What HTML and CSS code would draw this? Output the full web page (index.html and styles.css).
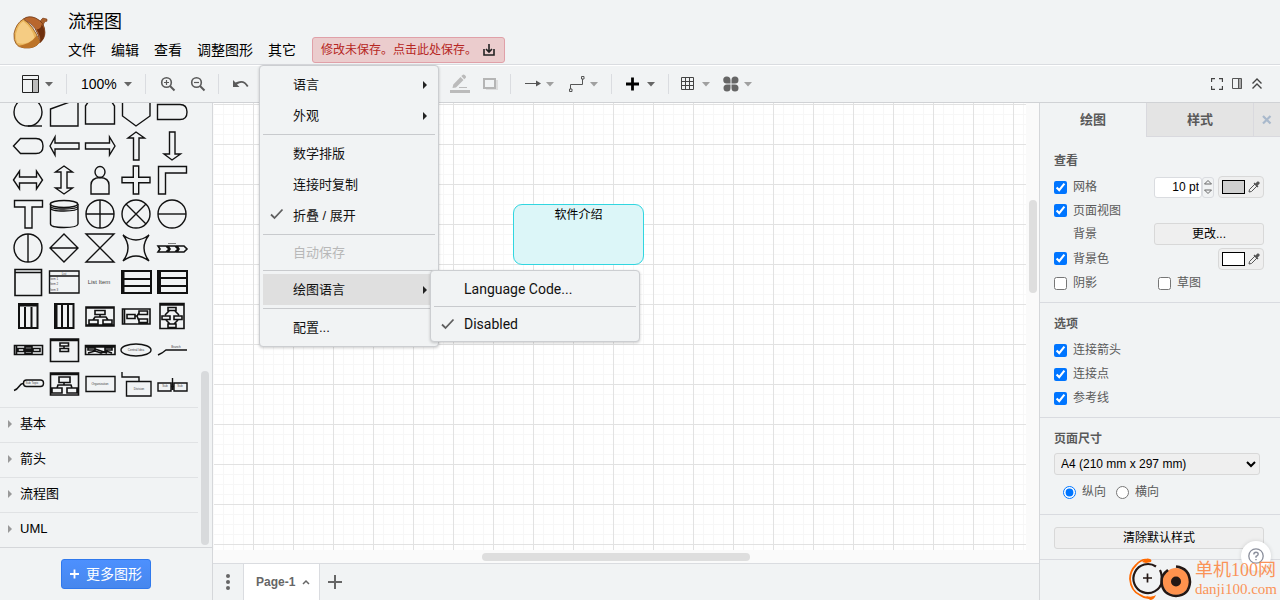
FILE: index.html
```html
<!DOCTYPE html>
<html lang="zh-CN">
<head>
<meta charset="utf-8">
<title>流程图</title>
<link rel="stylesheet" href="styles.css">
</head>
<body>
<svg class="defs" aria-hidden="true">
  <symbol id="caret" viewBox="0 0 10 16"><path d="M1 6h8l-4 4.500z" fill="currentColor"/></symbol>
  <symbol id="check" viewBox="0 0 14 12"><path d="M1 6.500l3.500 3.500L12.500 1.500" fill="none" stroke="#5f5f5f" stroke-width="1.800"/></symbol>
  <symbol id="sub" viewBox="0 0 6 10"><path d="M1 1l4 4-4 4z" fill="#222"/></symbol>
  <symbol id="exp" viewBox="0 0 6 10"><path d="M1 1l4 4-4 4z" fill="#999"/></symbol>
  <symbol id="dropper" viewBox="0 0 12 12"><path d="M1 11l.5-2.500 5.500-5.500 2 2-5.500 5.500z" fill="none" stroke="#555"/><path d="M6 2l4 4M7.500 3.500l2-2.300q1.500-.5 1.500 1l-2.500 2.500z" stroke="#555" stroke-width="1.300" fill="#555"/></symbol>
</svg>

<header class="header">
  <svg class="logo" viewBox="0 0 34 34">
    <path d="M26 9q0-4 3-6l4 1v2q-3 0-4 5z" fill="#a9602c" stroke="#7a3c18" stroke-width=".6"/>
    <path d="M10 4Q15 0 22 3Q31 7 31 17Q31 23 26 27Q25 11 10 4z" fill="#b9672d" stroke="#6f3512" stroke-width=".8"/>
    <path d="M28 9Q33 17 29 24L26 27Q28 22 23 14Q27 14 28 9z" fill="#6f300e"/>
    <path d="M1 18Q3 8 10 4Q20 10 26 26Q22 33 11 32Q0 31 1 18z" fill="#e8b45a" stroke="#8b4c17" stroke-width=".8"/>
    <path d="M3 18Q5 9 10 6Q18 12 21 22Q14 30 4 27Q2 23 3 18z" fill="#f5cc83"/>
    <path d="M4 30Q17 29 23 20L26 26Q22 33 11 32z" fill="#bd7428"/>
  </svg>
  <div class="heading">
    <div class="title">流程图</div>
    <nav class="menubar">
      <button>文件</button><button>编辑</button><button>查看</button><button>调整图形</button><button>其它</button>
      <button class="status">修改未保存。点击此处保存。
        <svg width="14" height="14" viewBox="0 0 14 14"><path d="M2 6v6h10V6M7 1v7M4 6l3 3 3-3" fill="none" stroke="#222" stroke-width="1.600"/></svg>
      </button>
    </nav>
  </div>
</header>

<div class="toolbar">
  <button class="tool dark" aria-label="布局"><svg width="18" height="18" viewBox="0 0 18 18"><path d="M11 5h6v12h-6z" fill="#bbb"/><path d="M.5.5h16v17H.5zM.5 4.500h16M10.500 4.500v13" fill="none" stroke="#222"/></svg><svg class="caret"><use href="#caret"/></svg></button>
  <i class="sep"></i>
  <button class="tool zoom">100%<svg class="caret"><use href="#caret"/></svg></button>
  <i class="sep"></i>
  <button class="tool" aria-label="放大"><svg width="16" height="16" viewBox="0 0 16 16" fill="none" stroke="#5a5a5a"><circle cx="6.500" cy="6.500" r="4.800" stroke-width="1.600"/><path d="M10 10l4.500 4.500" stroke-width="2"/><path d="M4 6.500h5M6.500 4v5" stroke-width="1.200"/></svg></button>
  <button class="tool" aria-label="缩小"><svg width="16" height="16" viewBox="0 0 16 16" fill="none" stroke="#5a5a5a"><circle cx="6.500" cy="6.500" r="4.800" stroke-width="1.600"/><path d="M10 10l4.500 4.500" stroke-width="2"/><path d="M4 6.500h5" stroke-width="1.200"/></svg></button>
  <i class="sep"></i>
  <button class="tool" aria-label="撤销"><svg width="16" height="16" viewBox="0 0 16 16"><path d="M0 4v7h6.500L4 8.500Q10 4 14 11l1.500-1Q11 2 2.500 6.500z" fill="#5a5a5a"/></svg></button>
  <button class="tool faded" aria-label="重做"><svg width="16" height="16" viewBox="0 0 16 16"><path d="M16 4v7H9.500L12 8.500Q6 4 2 11L.5 10Q5 2 13.500 6.500z" fill="#5a5a5a"/></svg></button>
  <i class="sep"></i>
  <button class="tool faded" aria-label="删除"><svg width="16" height="16" viewBox="0 0 16 16"><path d="M3 5h10v10H3zM2 2h12v2H2z" fill="#5a5a5a"/></svg></button>
  <i class="sep"></i>
  <button class="tool faded" aria-label="前置"><svg width="16" height="16" viewBox="0 0 16 16"><path d="M1 10l7-5 7 5-7 5z" fill="#5a5a5a"/></svg></button>
  <button class="tool faded" aria-label="后置"><svg width="16" height="16" viewBox="0 0 16 16"><path d="M1 6l7-5 7 5-7 5z" fill="#5a5a5a"/></svg></button>
  <i class="sep"></i>
  <button class="tool faded snug" aria-label="填充"><svg width="16" height="16" viewBox="0 0 16 16"><path d="M2 8l6-6 6 6-6 6z" fill="#5a5a5a"/></svg></button>
  <button class="tool snug" aria-label="线条颜色"><svg width="20" height="20" viewBox="0 0 20 20" fill="#bbb"><path d="M0 16h20v3H0zM2.500 14l.8-3.500L10.500 3l3 3-7.500 7.500zM11.300 2l1.600-1.300q1-.5 1.800.3l1 1q.8 1-.1 2L14.200 5.200zM9 13h8v1H9z"/></svg></button>
  <button class="tool" aria-label="阴影"><svg width="16" height="16" viewBox="0 0 16 16"><path d="M4 4h12v10H4z" fill="#ddd"/><path d="M2 3h11v9H2z" fill="#f1f3f4" stroke="#b5b5b5" stroke-width="2"/></svg></button>
  <i class="sep"></i>
  <button class="tool" aria-label="连接"><svg width="16" height="16" viewBox="0 0 16 16"><path d="M0 7.500h13" stroke="#555"/><path d="M11 4.500l5 3-5 3z" fill="#555"/></svg><svg class="caret light"><use href="#caret"/></svg></button>
  <button class="tool" aria-label="航点"><svg width="16" height="18" viewBox="0 0 16 18" fill="none" stroke="#555"><path d="M1.500 14V9.500h12V4"/><path d="M.5 14h2.500v2.500H.5zM12.500 1.500H15V4h-2.500z"/></svg><svg class="caret light"><use href="#caret"/></svg></button>
  <i class="sep"></i>
  <button class="tool" aria-label="插入"><svg width="16" height="16" viewBox="0 0 16 16"><path d="M0 8h13M6.500 1.500v13" stroke="#000" stroke-width="2.800"/></svg><svg class="caret"><use href="#caret"/></svg></button>
  <i class="sep tight"></i>
  <button class="tool snug" aria-label="表格"><svg width="16" height="16" viewBox="0 0 16 16"><path d="M.5 1.500h12v12H.5zM4.500 1.500v12M8.500 1.500v12M.5 5.500h12M.5 9.500h12" fill="none" stroke="#444"/></svg><svg class="caret light"><use href="#caret"/></svg></button>
  <button class="tool" aria-label="主题"><svg width="16" height="16" viewBox="0 0 16 16" fill="#666"><path d="M3.500.5a3.500 3.500 0 0 1 4 3.500v3.500H4a3.500 3.500 0 1 1-.5-7zM12 .5a3.500 3.500 0 1 1 0 7H8.500V4A3.500 3.500 0 0 1 12 .5zM4 8.500h3.500V12A3.500 3.500 0 1 1 4 8.500zM8.500 8.500H12A3.500 3.500 0 1 1 8.500 12z"/></svg><svg class="caret light"><use href="#caret"/></svg></button>
  <div class="views">
    <button class="tool" aria-label="全屏"><svg width="12" height="12" viewBox="0 0 12 12"><path d="M.5 4V.5H4M8 .5h3.500V4M11.500 8v3.500H8M4 11.500H.5V8" fill="none" stroke="#444" stroke-width="1.300"/></svg></button>
    <button class="tool" aria-label="格式面板"><svg width="12" height="12" viewBox="0 0 12 12"><path d="M7.500 1H11v10H7.500z" fill="#aaa"/><path d="M1.500.5h9v10h-9zM7.500.5v10" fill="none" stroke="#555"/></svg></button>
    <button class="tool" aria-label="折叠"><svg width="12" height="12" viewBox="0 0 12 12"><path d="M1.500 5.500L6 1l4.500 4.500M1.500 10.500L6 6l4.500 4.500" fill="none" stroke="#444" stroke-width="1.400"/></svg></button>
  </div>
</div>

<main class="work">
  <aside class="sidebar">
    <div class="library">
      <div class="palette">
        <svg viewBox="-18 -17 36 34"><circle r="14"/><path d="M0 14h14"/></svg>
        <svg viewBox="-18 -17 36 34"><path d="M-13.500-3L14-13V14h-27.500z"/></svg>
        <svg viewBox="-18 -17 36 34"><path d="M-14.500-6l4-6h21l4 6V12h-29z"/></svg>
        <svg viewBox="-18 -17 36 34"><path d="M-13.500-14h27.500V4L0 14-13.500 4z"/></svg>
        <svg viewBox="-18 -17 36 34"><path d="M-14.500-7.500H8q7 0 7 7.500t-7 7.500h-22.500z"/></svg>

        <svg viewBox="-18 -17 36 34"><path d="M-14.500 0l7-7.500H8q7 0 7 7.500t-7 7.500H-7.500z"/></svg>
        <svg viewBox="-18 -17 36 34"><path d="M-14 0l5-9v6H15V3H-9V9z"/></svg>
        <svg viewBox="-18 -17 36 34"><path d="M15 0L9.500-9v6h-24V3h24V9z"/></svg>
        <svg viewBox="-18 -17 36 34"><path d="M0-14l8.500 6H3V14h-5.500V-8H-8z"/></svg>
        <svg viewBox="-18 -17 36 34"><path d="M0 14l8.500-6H3v-22h-5.500V8H-8z"/></svg>

        <svg viewBox="-18 -17 36 34"><path d="M-14.500 0l6-9v6h17v-6l6 9-6 9V3h-17v6z"/></svg>
        <svg viewBox="-18 -17 36 34"><path d="M0-14l8.500 6H3V8h5.500L0 14-8.500 8H-3V-8h-5.500z"/></svg>
        <svg viewBox="-18 -17 36 34"><ellipse cy="-8" rx="5" ry="5.500"/><path d="M-9 14V5q0-7 9-7.500Q9-2 9 5v9z"/></svg>
        <svg viewBox="-18 -17 36 34"><path d="M-2.700-14h5.400v11.300H14v5.400H2.700V14h-5.400V2.700H-14v-5.400H-2.700z"/></svg>
        <svg viewBox="-18 -17 36 34"><path d="M-13.500-13.500h28v6.500h-21V14h-7z"/></svg>

        <svg viewBox="-18 -17 36 34"><path d="M-13.500-13.500h28V-7H4V14h-7V-7h-10.500z"/></svg>
        <svg viewBox="-18 -17 36 34"><path d="M-13.500-10v20q0 3.500 13.500 3.500t14-3.500v-20M-13.500-6q0 3 13.500 3T14-6M-13.500-8q0 3 13.500 3t14-3"/><ellipse cy="-10" rx="13.700" ry="3.500"/></svg>
        <svg viewBox="-18 -17 36 34"><circle r="14"/><path d="M-14 0h28M0-14v28"/></svg>
        <svg viewBox="-18 -17 36 34"><circle r="14"/><path d="M-10-10l20 20M10-10l-20 20"/></svg>
        <svg viewBox="-18 -17 36 34"><circle r="14"/><path d="M-14 0h28"/></svg>

        <svg viewBox="-18 -17 36 34"><circle r="14"/><path d="M0-14v28"/></svg>
        <svg viewBox="-18 -17 36 34"><path d="M0-14L14 0 0 14-14 0zM-14 0h28"/></svg>
        <svg viewBox="-18 -17 36 34"><path d="M-14-14h28l-28 28h28z"/></svg>
        <svg viewBox="-18 -17 36 34"><path d="M-13-13Q0-3 13-13 3 0 13 13 0 3-13 13-3 0-13-13z"/></svg>
        <svg viewBox="-18 -17 36 34" class="heavy"><path d="M-14-2H-6l3 3-3 3h-8l2-3zM-4-2h7l3 3-3 3h-7l2-3zM5-2h7l3 3-3 3H5l2-3z"/><path d="M-4-4.500h8" stroke-width=".5"/></svg>

        <svg viewBox="-18 -17 36 34" class="heavy"><path d="M-13-12.500h26.500v26h-26.500zM-13-9.500h26.500"/></svg>
        <svg viewBox="-18 -17 36 34"><path d="M-14.500-11H15v22h-29.500zM-14.500-6H15"/><text x="0" y="-7.500">List</text><text x="-10" y="-2.500">Item 1</text><text x="-10" y="3">Item 2</text><text x="-10" y="9">Item 3</text></svg>
        <svg viewBox="-18 -17 36 34"><text class="item" x="-1" y="2">List Item</text></svg>
        <svg viewBox="-18 -17 36 34" class="bold"><path d="M-14-11H15v22h-29zM-14-3H15M-14 4H15M-12.500-11v22"/></svg>
        <svg viewBox="-18 -17 36 34" class="bold"><path d="M-14-11H15v22h-29zM-11.500-4H15M-11.500 4H15M-12-11v22"/></svg>

        <svg viewBox="-18 -17 36 34" class="bold"><path d="M-9-12H9.500v24H-9zM-9-10.500H9.500M-3-9v21M3.500-9v21"/></svg>
        <svg viewBox="-18 -17 36 34" class="bold"><path d="M-9-12H9.500v24H-9zM-7.500-12v24M-2-12v24M4-12v24"/></svg>
        <svg viewBox="-18 -17 36 34" class="heavy"><path d="M-14-9h28V10h-28zM-14-8h28M-14 9h28M-5-5.500h10v4H-5zM-11 4h9v4h-9zM3 4h9v4H3zM0-2v3M-7 4l2-3H6l2 3"/></svg>
        <svg viewBox="-18 -17 36 34" class="heavy"><path d="M-13.500-7H14V8h-27.500zM-11.500-7V8M-9-1.500H-1v4h-8zM3-5h8.500v3.500H3zM3 3h8.500v3.500H3zM-1 0h2l2-3M1 0l2 5"/></svg>
        <svg viewBox="-18 -17 36 34" class="heavy"><path d="M-12-12.500h24v25h-24zM-12-11h24M-4-8.500h8v3h-8zM-10 0h8v3.500h-8zM2 0h8v3.500H2zM-4 8h8v3.500h-8zM-3-5l-4 4M3-5l4 4M-6 4l4 4M6 4L2 8"/></svg>

        <svg viewBox="-18 -17 36 34" class="heavy"><path d="M-13.500-4.500h28v9h-28zM-11.500-4.500v9M-10-1.500h6v3h-6zM-3-3h7v2h-7zM-3 1.500h7v2h-7zM5-1.500h7v3H5zM-4 0h9"/></svg>
        <svg viewBox="-18 -17 36 34" class="heavy"><path d="M-13.500-11H14.500v22.500h-28zM-13.500-9.500h28M-4-7h8.500v3H-4zM-4-1.500h8.500v3H-4zM0-4v2.500"/></svg>
        <svg viewBox="-18 -17 36 34" class="heavy"><path d="M-14.500-4.500H15v9h-29.500zM-14.500-3H15M-12-2h7v2h-7zM5-2h7v2H5zM-12 3L-5 1l6 2 5-2 6 2M-5-1L7 3"/></svg>
        <svg viewBox="-18 -17 36 34"><ellipse rx="15" ry="6"/><text x="0" y="1">Central Idea</text></svg>
        <svg viewBox="-18 -17 36 34"><path d="M-14 5l4-2 4-3H15"/><text x="4" y="-2">Branch</text></svg>

        <svg viewBox="-18 -17 36 34"><path d="M-14 6.500q3-1 5-4T-5-.5"/><rect x="-4.500" y="-4" width="20" height="6.500" rx="3"/><text x="4" y="0">Sub Topic</text></svg>
        <svg viewBox="-18 -17 36 34" class="heavy"><path d="M-13.500-11H14.500v22h-28zM-13.500-9.500h28M-5-7h11v5.500H-5zM-12 4h10v5h-10zM3 4h10v5H3zM0-1.500V1M-7 4l1-3H7l1 3"/></svg>
        <svg viewBox="-18 -17 36 34"><path d="M-14-7.500H15v15h-29z"/><text x="0" y="1">Organization</text></svg>
        <svg viewBox="-18 -17 36 34"><path d="M-9.500-2.500H15V12H-9.500zM3-2.500V-7h-17v-5"/><text x="3" y="6">Division</text></svg>
        <svg viewBox="-18 -17 36 34"><path d="M-14-1h13v8h-13zM2-1h13v8H2zM.500-6V6M-1 2.500h3"/><text x="-7" y="3">Sub</text><text x="8" y="3">Sub</text></svg>
      </div>
      <button class="section-head"><svg><use href="#exp"/></svg>基本</button>
      <button class="section-head"><svg><use href="#exp"/></svg>箭头</button>
      <button class="section-head"><svg><use href="#exp"/></svg>流程图</button>
      <button class="section-head"><svg><use href="#exp"/></svg>UML</button>
      <i class="side-thumb"></i>
    </div>
    <div class="more"><button><svg width="10" height="10" viewBox="0 0 10 10"><path d="M0 5h9M4.500.5v9" stroke="#fff" stroke-width="1.800"/></svg>更多图形</button></div>
  </aside>

  <section class="editor">
    <div class="view">
      <div class="canvas"><div class="node">软件介绍</div></div>
      <div class="track"><i class="v-thumb"></i></div>
      <div class="track"><i class="h-thumb"></i></div>
    </div>
    <footer class="pages">
      <button class="dots" aria-label="页面"><svg width="6" height="18" viewBox="0 0 6 18" fill="#666"><circle cx="3" cy="3" r="2"/><circle cx="3" cy="9" r="2"/><circle cx="3" cy="15" r="2"/></svg></button>
      <button class="page">Page-1<svg width="8" height="6" viewBox="0 0 8 6"><path d="M1 5l3-3 3 3" fill="none" stroke="#666" stroke-width="1.500"/></svg></button>
      <button class="add" aria-label="添加页面"><svg width="14" height="14" viewBox="0 0 14 14"><path d="M0 7h14M7 0v14" stroke="#666" stroke-width="2"/></svg></button>
    </footer>
  </section>

  <aside class="format">
    <div class="tabs"><button class="tab active">绘图</button><button class="tab">样式</button><button class="close" aria-label="关闭"><svg width="10" height="10" viewBox="0 0 10 10"><path d="M1 1l7.500 7.500M8.500 1L1 8.500" stroke="#a9b9cc" stroke-width="2.200"/></svg></button></div>
    <section class="group first">
      <h2>查看</h2>
      <div class="row"><label><input type="checkbox" checked>网格</label>
        <span class="stepper"><input type="text" value="10 pt" aria-label="网格大小"><span class="spin"><button aria-label="增加"><svg width="8" height="5" viewBox="0 0 8 5"><path d="M.5 4h7L4 .5z" fill="none" stroke="#666"/></svg></button><button aria-label="减少"><svg width="8" height="5" viewBox="0 0 8 5"><path d="M.5 1h7L4 4.500z" fill="none" stroke="#666"/></svg></button></span></span>
        <button class="color" aria-label="网格颜色"><i class="swatch grey"></i><svg width="12" height="12"><use href="#dropper"/></svg></button></div>
      <div class="row short"><label><input type="checkbox" checked>页面视图</label></div>
      <div class="row"><span class="indent">背景</span><button class="push change">更改...</button></div>
      <div class="row tall"><label><input type="checkbox" checked>背景色</label><button class="color" aria-label="背景颜色"><i class="swatch"></i><svg width="12" height="12"><use href="#dropper"/></svg></button></div>
      <div class="row halves"><label><input type="checkbox">阴影</label><label><input type="checkbox">草图</label></div>
    </section>
    <section class="group">
      <h2>选项</h2>
      <div class="row"><label><input type="checkbox" checked>连接箭头</label></div>
      <div class="row"><label><input type="checkbox" checked>连接点</label></div>
      <div class="row"><label><input type="checkbox" checked>参考线</label></div>
    </section>
    <section class="group paper">
      <h2>页面尺寸</h2>
      <select aria-label="页面尺寸"><option>A4 (210 mm x 297 mm)</option></select>
      <div class="radios"><label><input type="radio" name="dir" checked>纵向</label><label><input type="radio" name="dir">横向</label></div>
    </section>
    <section class="group last"><button class="push">清除默认样式</button></section>
  </aside>
</main>

<div class="popup menu">
  <button class="entry">语言<svg class="arrow"><use href="#sub"/></svg></button>
  <button class="entry">外观<svg class="arrow"><use href="#sub"/></svg></button>
  <hr>
  <button class="entry">数学排版</button>
  <button class="entry">连接时复制</button>
  <button class="entry"><svg class="tick"><use href="#check"/></svg>折叠 / 展开</button>
  <hr>
  <button class="entry" disabled>自动保存</button>
  <hr>
  <button class="entry hover">绘图语言<svg class="arrow"><use href="#sub"/></svg></button>
  <hr>
  <button class="entry">配置...</button>
</div>
<div class="popup submenu">
  <button class="entry">Language Code...</button>
  <hr>
  <button class="entry"><svg class="tick"><use href="#check"/></svg>Disabled</button>
</div>

<button class="help" aria-label="帮助"><svg width="16" height="16" viewBox="0 0 16 16" fill="none" stroke="#8b8f9c"><circle cx="8" cy="8" r="7.200" stroke-width="1.300"/><path d="M5.800 6.500q0-2.300 2.200-2.300t2.200 2Q10.200 7.500 8 8.500v1.200M8 11v1.300" stroke-width="1.400"/></svg></button>
<div class="brand">
  <svg width="64" height="42" viewBox="0 0 64 42" fill="none">
    <path d="M22 3Q14-1 7 7 1 13 1 21 2 33 11 37q7 5 14 2" stroke="#ff6a00" stroke-width="1.800"/>
    <path d="M13 4Q17-1 21 1q2 1 1 3l-5 1zM17 38q6 2 10-1-2 5-6 5z" fill="#ff6a00"/>
    <path d="M27 8.500A14.500 14.500 0 1 0 33 24Q33 16 31 12" stroke="#231815" stroke-width="2.200"/>
    <circle cx="47" cy="23.500" r="13.500" fill="#ff924d"/>
    <path d="M39 12q-7 5-6.500 12 1 13 14.500 14 13-.5 14-14-.5-14-14-15.500" stroke="#231815" stroke-width="2.600"/>
    <circle cx="47" cy="23.500" r="5" fill="#231815"/><path d="M14 20h9M18.500 15.500v9" stroke="#231815" stroke-width="1.700"/>
  </svg>
  <div class="brand-text"><div class="brand-name">单机100网</div><div class="brand-url">danji100.com</div></div>
</div>
</body>
</html>
```
FILE: styles.css
```css
* { box-sizing: border-box; }
body {
  margin: 0;
  height: 100vh;
  display: flex;
  flex-direction: column;
  overflow: hidden;
  position: relative;
  background: #f1f3f4;
  color: #000;
  font: 13px/20px "Liberation Sans", "Noto Sans CJK SC", sans-serif;
}
button {
  font: inherit;
  color: inherit;
  background: none;
  border: 0;
  padding: 0;
  display: flex;
  align-items: center;
  white-space: nowrap;
}
svg { display: block; flex: none; }
.defs { position: absolute; width: 0; height: 0; }

.header {
  display: flex;
  height: 65px;
  flex: none;
  padding: 10px 13px 0;
  border-bottom: 1px solid #dadce0;
}
.logo { width: 35px; height: 35px; margin-top: 5px; }
.heading { margin-left: 20px; }
.title { font-size: 18px; line-height: 24px; }
.menubar { display: flex; align-items: center; gap: 15px; height: 26px; margin-top: 3px; font-size: 14px; }
.status {
  height: 26px;
  gap: 5px;
  margin-left: 1px;
  padding: 0 8px;
  border: 1px solid #e0a0a8;
  border-radius: 3px;
  background: #ebcccd;
  color: #b62623;
  font-size: 12px;
}

.toolbar {
  display: flex;
  align-items: center;
  height: 38px;
  flex: none;
  padding: 0 17px 0 22px;
  border-top: 1px solid #fff;
  border-bottom: 1px solid #d0d2d5;
}
.tool { gap: 4px; color: #666; margin-right: 14px; }
.tool.snug { margin-right: 12px; }
.tool:has(+ .sep) { margin-right: 0; }
.tool.zoom { font-size: 14px; gap: 6px; color: #000; }
.faded { opacity: .4; }
.caret { width: 10px; height: 16px; color: #666; }
.caret.light { color: #a0a0a0; }
.sep { width: 1px; height: 20px; margin: 0 14px 0 12px; background: #dadce0; flex: none; }
.sep.tight { margin-right: 12px; }
.views { display: flex; gap: 8px; margin-left: auto; }
.views .tool { margin: 0; }

.work { display: flex; flex: 1; min-height: 0; }
.sidebar { width: 213px; flex: none; display: flex; flex-direction: column; border-right: 1px solid #d5d7da; }
.library {
  flex: 1;
  min-height: 0;
  display: flex;
  flex-direction: column;
  justify-content: flex-end;
  overflow: hidden;
  position: relative;
}
.palette { display: grid; grid-template-columns: repeat(5, 36px); padding: 0 0 6px 10px; }
.palette svg { width: 36px; height: 34px; fill: none; stroke: #111; stroke-width: 1.4px; }
.palette .heavy { stroke-width: 1.6px; }
.palette .bold { stroke-width: 2px; }
.palette text { font-size: 3px; fill: #444; stroke: none; text-anchor: middle; }
.palette .item { font-size: 6px; }
.section-head {
  height: 35px;
  flex: none;
  margin-right: 14px;
  padding: 0 0 2px 7px;
  gap: 7px;
  border-top: 1px solid #e0e2e4;
}
.section-head svg { width: 6px; height: 10px; }
.side-thumb { position: absolute; right: 3px; bottom: 2px; width: 8px; height: 174px; border-radius: 4px; background: #d8dadc; }
.more { display: flex; justify-content: center; height: 53px; flex: none; padding-top: 11px; border-top: 1px solid #d5d7da; }
.more button {
  height: 30px;
  padding: 0 8px;
  gap: 6px;
  border: 1px solid #3079ed;
  border-radius: 3px;
  background: linear-gradient(#4d90fe, #4787ed);
  color: #fff;
  font-size: 14px;
}

.editor { flex: 1; min-width: 0; display: flex; flex-direction: column; }
.view { flex: 1; min-height: 0; display: grid; grid-template: 1fr 13px / 1fr 13px; background: #fafafa; }
.canvas {
  position: relative;
  margin-left: 1px;
  background-color: #fff;
  background-image:
    linear-gradient(90deg, #e2e2e2 1px, transparent 1px),
    linear-gradient(#e2e2e2 1px, transparent 1px),
    linear-gradient(90deg, #f7f7f7 1px, transparent 1px),
    linear-gradient(#f7f7f7 1px, transparent 1px);
  background-size: 40px 40px, 40px 40px, 10px 10px, 10px 10px;
  background-position: -1px 1px;
}
.node {
  position: absolute;
  left: 299px;
  top: 101px;
  width: 131px;
  height: 61px;
  border: 1px solid #31d6e0;
  border-radius: 9px;
  background: #dcf6f8;
  font-size: 12px;
  line-height: 20px;
  text-align: center;
}
.track { position: relative; }
.v-thumb { position: absolute; left: 3px; top: 97px; width: 8px; height: 93px; border-radius: 4px; background: #dedede; }
.h-thumb { position: absolute; left: 269px; top: 3px; width: 268px; height: 8px; border-radius: 4px; background: #dedede; }
.pages { display: flex; height: 37px; flex: none; border-top: 1px solid #dadce0; }
.dots { width: 30px; justify-content: center; }
.page {
  padding: 0 9px 0 12px;
  gap: 7px;
  border: solid #dadce0;
  border-width: 0 1px;
  background: #fff;
  color: #666;
  font-size: 12px;
  font-weight: bold;
}
.add { padding: 0 8px; }

.format { width: 241px; flex: none; border-left: 1px solid #d5d7da; color: #5a5a5a; font-size: 12px; }
.tabs { display: flex; height: 34px; }
.tab { flex: 1; justify-content: center; background: #e4e4e4; border: solid #d9d9de; border-width: 0 0 1px 1px; font-size: 13px; font-weight: bold; }
.tab.active { background: none; border: 0; }
.close { width: 27px; justify-content: center; background: #e4e4e4; border: solid #d9d9de; border-width: 0 0 1px 1px; }
.group { padding: 10px 16px 7px 14px; border-bottom: 1px solid #d9dbe0; }
.group.first { padding-top: 13px; }
.group h2 { margin: 0 0 3px; font-size: 12px; line-height: 22px; }
.row { display: flex; align-items: center; height: 24px; }
.row.short { height: 23px; }
.row.tall { height: 25px; }
.row label, .radios label { display: flex; align-items: center; gap: 6px; }
.row label { flex: 1; }
.halves label + label { flex: none; width: 106px; }
.group input[type="checkbox"], .group input[type="radio"] { width: 13px; height: 13px; margin: 0; accent-color: #0075ff; }
.indent { flex: 1; padding-left: 19px; }
.stepper { display: flex; margin-right: 4px; }
.stepper input { width: 48px; height: 21px; padding: 0 2px; border: 1px solid #dadce0; border-radius: 3px; font: 12px "Liberation Sans", sans-serif; text-align: right; color: #000; }
.spin { display: flex; flex-direction: column; width: 12px; border: 1px solid #dadce0; border-radius: 3px; }
.spin button { flex: 1; justify-content: center; }
.color { width: 46px; height: 22px; padding: 0 3px; gap: 3px; border: 1px solid #d8d8d8; border-radius: 4px; background: #efefef; }
.swatch { width: 23px; height: 14px; border: 1px solid #000; background: #fff; }
.swatch.grey { background: #d0d0d0; }
.push { justify-content: center; width: 100%; height: 22px; border: 1px solid #d8d8d8; border-radius: 3px; background: #efefef; color: #000; }
.push.change { width: 110px; }
.paper { padding-bottom: 10px; }
.group select { display: block; width: calc(100% - 4px); height: 22px; border: 1px solid #d8d8d8; border-radius: 3px; background: #efefef; color: #000; font: 12px "Liberation Sans", sans-serif; padding: 0 2px; }
.radios { display: flex; gap: 10px; height: 24px; margin: 5px 0 0 9px; }
.group.last { padding: 12px 16px 10px 14px; }

.popup {
  position: absolute;
  padding: 3px;
  border: 1px solid #ccced1;
  border-radius: 4px;
  background: #f1f3f4;
  box-shadow: 0 1px 3px #0003;
}
.menu { left: 259px; top: 65px; width: 180px; }
.submenu { left: 430px; top: 270px; width: 210px; padding-top: 4px; }
.entry { position: relative; width: 100%; height: 31px; padding-left: 30px; color: #111; }
.entry:disabled { height: 29px; color: #b8b8b8; }
.entry.hover { background: #dfdfdf; }
.popup hr { margin: 3px 0; border: 0; border-top: 1px solid #c8cacd; }
.arrow { width: 6px; height: 10px; margin-left: auto; margin-right: 7px; }
.tick { position: absolute; left: 7px; top: 8px; width: 14px; height: 12px; }
.submenu .entry { font-family: Roboto, sans-serif; font-size: 14px; height: 28px; }

.help { position: absolute; right: 9px; bottom: 29px; width: 30px; height: 30px; justify-content: center; border-radius: 50%; background: #fff; box-shadow: 0 0 4px #0002; }
.brand { position: absolute; right: 3px; bottom: 0; display: flex; align-items: center; gap: 2px; color: #fa9358; }
.brand-name { font: 18px/20px "Liberation Serif", "Noto Sans CJK SC", serif; }
.brand-url { font: 15px/18px "Liberation Serif", serif; }
```
